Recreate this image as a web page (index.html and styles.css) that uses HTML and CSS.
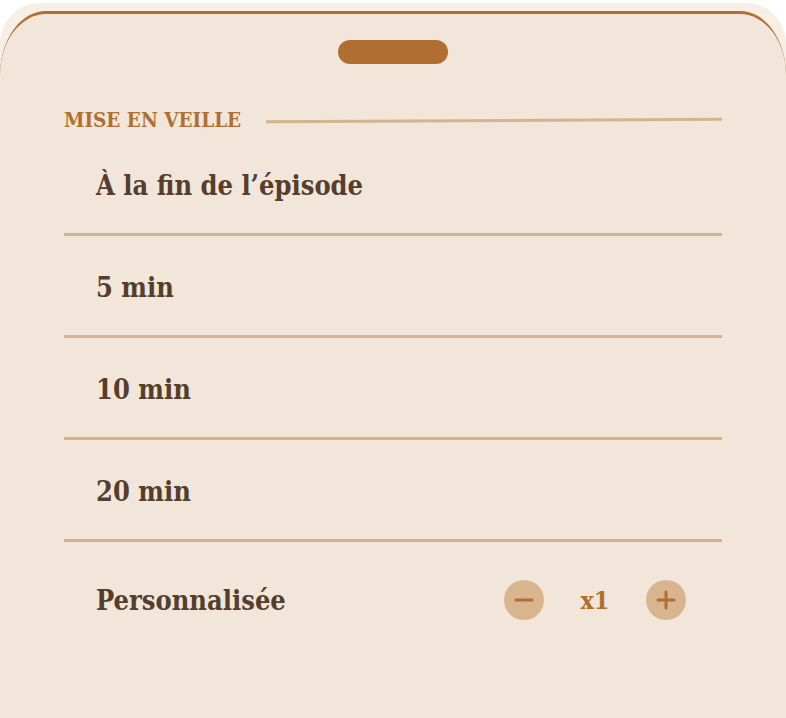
FILE: index.html
```html
<!DOCTYPE html>
<html lang="fr">
<head>
    <meta charset="UTF-8">
    <meta name="viewport" content="width=device-width, initial-scale=1.0">
    <title>Mise en veille</title>
    <link rel="stylesheet" href="styles.css">
</head>
<body>
    <div class="sheet-back">
        <div class="sheet">
            <div class="handle"></div>

            <div class="section-head">
                <span class="section-title">MISE EN VEILLE</span>
                <span class="section-rule"></span>
            </div>

            <div class="option">À la fin de l’épisode</div>
            <div class="option">5 min</div>
            <div class="option">10 min</div>
            <div class="option">20 min</div>
            <div class="option option-custom">
                <span>Personnalisée</span>
                <div class="stepper">
                    <button class="step-btn" aria-label="moins">
                        <svg width="20" height="20" viewBox="0 0 20 20"><path d="M2 10h16" stroke="#b06f30" stroke-width="3" stroke-linecap="round"/></svg>
                    </button>
                    <span class="step-value">x1</span>
                    <button class="step-btn" aria-label="plus">
                        <svg width="20" height="20" viewBox="0 0 20 20"><path d="M2 10h16M10 2v16" stroke="#b06f30" stroke-width="3" stroke-linecap="round"/></svg>
                    </button>
                </div>
            </div>
        </div>
    </div>
</body>
</html>
```

FILE: styles.css
```css
body {
    margin: 0;
    height: 100vh;
    background-color: #ffffff;
    font-family: "DejaVu Serif", serif;
    font-stretch: condensed;
    color: #553e2d;
    overflow: hidden;
}

.sheet-back {
    margin-top: 3px;
    padding-top: 8px;
    background-color: #f6efe6;
    border-radius: 40px 40px 0 0;
}

.sheet {
    box-sizing: border-box;
    height: calc(100vh - 11px);
    background-color: #f1e6d9;
    border-top: 3px solid #b06f30;
    border-radius: 46px 46px 0 0 / 64px 64px 0 0;
    padding: 0 64px;
}

.handle {
    width: 110px;
    height: 24px;
    border-radius: 12px;
    background-color: #b06f30;
    margin: 26px auto 0;
}

.section-head {
    display: flex;
    align-items: center;
    gap: 25px;
    height: 28px;
    margin-top: 42px;
}

.section-title {
    font-size: 20.5px;
    font-weight: bold;
    color: #b06f30;
    white-space: nowrap;
}

.section-rule {
    flex: 1;
    height: 3px;
    background-color: #d3b48e;
    transform: rotate(-0.3deg);
}

.option {
    display: flex;
    align-items: center;
    justify-content: space-between;
    box-sizing: border-box;
    height: 102px;
    padding: 4px 36px 0 32px;
    border-bottom: 3px solid #d3b48e;
    font-size: 27px;
    font-weight: bold;
}

.option-custom {
    border-bottom: none;
    padding-top: 14px;
}

.stepper {
    display: flex;
    align-items: center;
}

.step-btn {
    display: flex;
    align-items: center;
    justify-content: center;
    width: 40px;
    height: 40px;
    padding: 0;
    border: none;
    border-radius: 50%;
    background-color: #d8b58f;
    cursor: pointer;
}

.step-value {
    width: 102px;
    text-align: center;
    font-size: 25px;
    font-weight: bold;
    color: #b06f30;
}
```
